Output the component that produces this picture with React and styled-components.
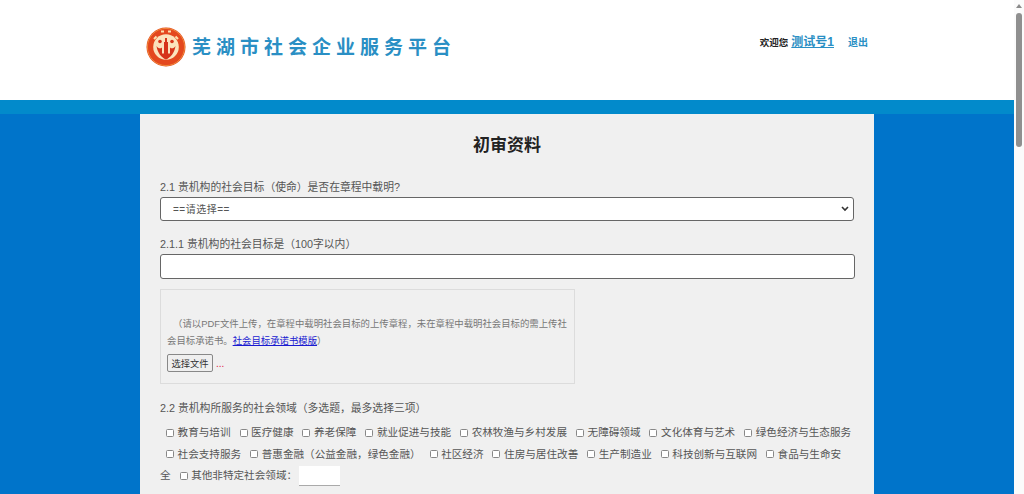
import React from 'react'
import styled, { createGlobalStyle } from 'styled-components'

const cjk = '"Liberation Sans","Noto Sans CJK SC",sans-serif'
const chevron = `url("data:image/svg+xml,%3Csvg xmlns='http://www.w3.org/2000/svg' width='8' height='6' viewBox='0 0 8 6'%3E%3Cpath d='M1 1l3 3 3-3' fill='none' stroke='%23333' stroke-width='1.6'/%3E%3C/svg%3E")`

const Global = createGlobalStyle`
  body { margin: 0; font-family: ${cjk}; background: #0074ca; color: #555; }
`
const ScrollRail = styled.div`
  position: fixed;
  top: 0;
  right: 0;
  bottom: 0;
  width: 10px;
  background: #fbfbfb;
`
const ScrollArrow = styled.div`
  position: absolute;
  top: 4px;
  left: 2px;
  border-left: 3px solid transparent;
  border-right: 3px solid transparent;
  border-bottom: 4px solid #8a8a8a;
`
const ScrollThumb = styled.div`
  position: absolute;
  top: 13px;
  left: 2px;
  width: 6px;
  height: 134px;
  border-radius: 3px;
  background: #8f8f8f;
`
const Header = styled.header`
  height: 100px;
  background: #fff;
  display: flex;
  justify-content: space-between;
  padding: 0 156px 0 146px;
`
const Brand = styled.div`
  display: flex;
  align-items: center;
  gap: 6px;
  height: 94px;
`
const BrandName = styled.div`
  margin-bottom: 3px;
  font-size: 19px;
  font-weight: 700;
  letter-spacing: 5px;
  color: #2a8fc4;
  white-space: nowrap;
`
const UserBox = styled.div`
  display: flex;
  align-items: baseline;
  height: 40px;
  padding-top: 32px;
  font-size: 9.5px;
  color: #222;
  font-weight: 700;
`
const UserLink = styled.a`
  color: #2a8fc4;
  font-size: ${p => p.$big ? '12px' : '10px'};
  margin-left: ${p => p.$big ? '3px' : '14px'};
  text-decoration: ${p => p.$big ? 'underline' : 'none'};
  font-weight: 700;
`
const Main = styled.main`
  border-top: 14px solid #028acb;
  display: flex;
  justify-content: center;
`
const Card = styled.section`
  width: 734px;
  height: 1480px;
  box-sizing: border-box;
  margin-right: 10px;
  background: #f0f0f0;
  padding: 0 20px;
`
const Title = styled.h1`
  margin: 0;
  padding-top: 20px;
  height: 66px;
  box-sizing: border-box;
  text-align: center;
  font-size: 17px;
  line-height: 24px;
  font-weight: 700;
  color: #222;
`
const Label = styled.label`
  display: block;
  font-size: 10.8px;
  line-height: 14px;
  color: #555;
`
const Select = styled.select`
  display: block;
  width: 694px;
  height: 24px;
  margin: 3px 0 16px;
  padding: 0 12px;
  appearance: none;
  background: #fff ${chevron} no-repeat right 4px center;
  border: 1px solid #666;
  border-radius: 3px;
  font: 10px ${cjk};
  letter-spacing: 0.5px;
  color: #555;
`
const TextInput = styled.input`
  display: block;
  width: 695px;
  height: 25px;
  box-sizing: border-box;
  margin: 3px 0 10px;
  background: #fff;
  border: 1px solid #666;
  border-radius: 3px;
`
const UploadBox = styled.div`
  width: 415px;
  height: 95px;
  box-sizing: border-box;
  border: 1px solid #dcdcdc;
  padding: 25px 6px 0;
  margin-bottom: 17px;
`
const UploadNote = styled.p`
  margin: 0;
  font-size: 9.4px;
  line-height: 17px;
  color: #777;
  text-indent: 6px;
`
const TemplateLink = styled.a`
  color: #1a1ad0;
  text-decoration: underline;
`
const FileRow = styled.div`
  display: flex;
  align-items: center;
  gap: 3px;
  margin-top: 5px;
`
const FileButton = styled.button`
  height: 18px;
  width: 46px;
  padding: 0;
  background: #efefef;
  border: 1px solid #888;
  border-radius: 2px;
  font: 9.3px ${cjk};
  color: #333;
`
const Dots = styled.span`
  font-size: 10px;
  color: #e02040;
`
const Options = styled.div`
  margin-top: 7px;
  padding-right: 2.4px;
  font-size: 10.6px;
  line-height: 21.5px;
  color: #555;
`
const Option = styled.label`
  margin-left: 6px;
`
const Check = styled.input.attrs({ type: 'checkbox' })`
  width: 8px;
  height: 8px;
  margin: 0 3.6px 0 0;
  vertical-align: -0.5px;
  appearance: none;
  background: #fff;
  border: 1px solid #888;
  border-radius: 1.5px;
`
const OtherInput = styled.input`
  width: 41px;
  height: 20px;
  box-sizing: border-box;
  margin-left: 2px;
  vertical-align: middle;
  background: #fff;
  border: 0;
  border-bottom: 1px solid #aaa;
`

const fields = ['教育与培训','医疗健康','养老保障','就业促进与技能','农林牧渔与乡村发展','无障碍领域','文化体育与艺术','绿色经济与生态服务','社会支持服务','普惠金融（公益金融，绿色金融）','社区经济','住房与居住改善','生产制造业','科技创新与互联网','食品与生命安全']

const Logo = () => (
  <svg width="40" height="40" viewBox="0 0 40 40">
    <circle cx="20" cy="20" r="19.5" fill="#e4481f" />
    <circle cx="20" cy="20" r="18.6" fill="none" stroke="#f08a3c" strokeWidth="1" />
    <circle cx="20" cy="20" r="12.8" fill="#fbe3bd" />
    <path d="M10.5 19c1 7 5 11.5 9.5 13.5 4.500-2 8.500-6.500 9.500-13.500-1.500 2.500-4 3-5.500 1.500v6h-2V15h-4v11.500h-2v-6c-1.500 1.500-4 1-5.500-1.500z" fill="#d6341b" />
    <circle cx="14" cy="14.500" r="1.800" fill="#d6341b" />
    <circle cx="26" cy="14.500" r="1.800" fill="#d6341b" />
    <path d="M19 11h2v4h-2z" fill="#d6341b" />
    <path d="M8 12l2.500-2.500M15 4.500h3M22 4.500h3M29.500 9.500L32 12" stroke="#fce0ae" strokeWidth="2" />
  </svg>
)

export default function App() {
  return (
    <>
      <Global />
      <ScrollRail>
        <ScrollArrow />
        <ScrollThumb />
      </ScrollRail>
      <Header>
        <Brand>
          <Logo />
          <BrandName>芜湖市社会企业服务平台</BrandName>
        </Brand>
        <UserBox>
          欢迎您
          <UserLink $big href="#">测试号1</UserLink>
          <UserLink href="#">退出</UserLink>
        </UserBox>
      </Header>
      <Main>
        <Card>
          <Title>初审资料</Title>
          <Label>2.1 贵机构的社会目标（使命）是否在章程中载明?</Label>
          <Select defaultValue="">
            <option value="">==请选择==</option>
          </Select>
          <Label>2.1.1 贵机构的社会目标是（100字以内）</Label>
          <TextInput />
          <UploadBox>
            <UploadNote>
              （请以PDF文件上传，在章程中载明社会目标的上传章程，未在章程中载明社会目标的需上传社会目标承诺书。<TemplateLink href="#">社会目标承诺书模版</TemplateLink>）
            </UploadNote>
            <FileRow>
              <FileButton>选择文件</FileButton>
              <Dots>...</Dots>
            </FileRow>
          </UploadBox>
          <Label>2.2 贵机构所服务的社会领域（多选题，最多选择三项）</Label>
          <Options>
            {fields.map(f => (
              <React.Fragment key={f}>
                <Option><Check />{f}</Option>{' '}
              </React.Fragment>
            ))}
            <Option><Check />其他非特定社会领域：<OtherInput /></Option>
          </Options>
        </Card>
      </Main>
    </>
  )
}
